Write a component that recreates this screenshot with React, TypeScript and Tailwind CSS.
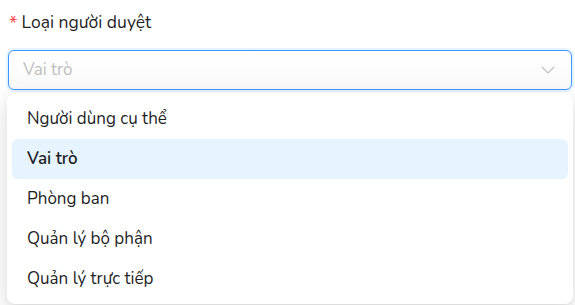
import React from "react";

const items = ["Người dùng cụ thể", "Vai trò", "Phòng ban", "Quản lý bộ phận", "Quản lý trực tiếp"];

export default function App() {
  return (
    <div
      className="relative w-[575px] h-[305px] overflow-hidden bg-white text-[#1f1f1f]"
      style={{ fontFamily: '"Nunito", "Open Sans", sans-serif' }}
    >
      <div className="flex flex-col px-[8px] pt-[10px]">
        <div className="flex items-center h-[24px] text-[17.5px] leading-[24px]">
          <span className="text-[#ff4d4f] text-[19px] mr-[4px] ml-[1px] mt-[4px]">*</span>
          <span>Loại người duyệt</span>
        </div>
        <div className="mt-[16px] h-[40px] w-[564px] rounded-[6px] border border-[#4096ff] shadow-[0_0_0_2px_rgba(5,145,255,0.1)] bg-gradient-to-b from-white to-[#fafafa] flex items-center justify-between pl-[14px] pr-[16px]">
          <span className="text-[17px] text-[#bfbfbf]">Vai trò</span>
          <svg width="14" height="14" viewBox="0 0 14 14" fill="none" stroke="#bfbfbf" strokeWidth="1.2">
            <path d="M1 4 L7 10 L13 4" />
          </svg>
        </div>
        <div className="mt-[60px] h-px bg-[#e5e5e5]" />
        <div className="mt-[75px] h-px bg-[#e5e5e5]" />
        <div className="mt-[84px] flex items-center text-[17px]">
          <span className="text-[#ff4d4f] mr-[4px]">*</span>
          <span>Thời hạn duyệt</span>
        </div>
      </div>

      <div className="absolute left-[7px] top-[93px] w-[566px] h-[211px] rounded-[8px] bg-white shadow-[0_6px_16px_0_rgba(0,0,0,0.08),0_3px_6px_-4px_rgba(0,0,0,0.12),0_9px_28px_8px_rgba(0,0,0,0.05)] px-[5px] pt-[6px] flex flex-col">
        {items.map((it, i) => (
          <div
            key={it}
            className={
              i === 1
                ? "h-[40px] rounded-[6px] bg-[#e6f4ff] flex items-center px-[15px] text-[17px] font-semibold text-[#1f1f1f]"
                : "h-[40px] rounded-[6px] flex items-center px-[15px] text-[17px] text-[#1f1f1f]"
            }
          >
            {it}
          </div>
        ))}
      </div>
    </div>
  );
}
